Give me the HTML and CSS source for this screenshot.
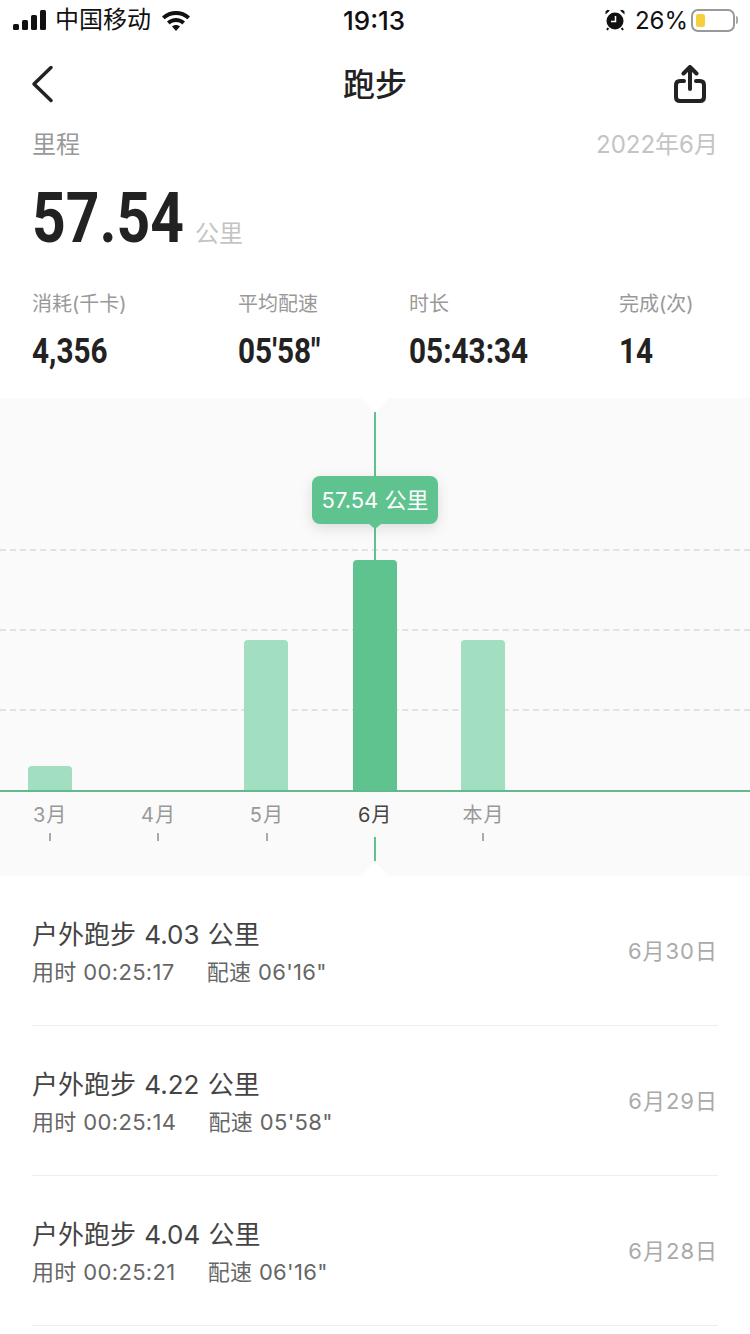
FILE: index.html
```html
<!doctype html>
<html lang="zh-CN">
<head>
    <meta charset="utf-8">
    <title>跑步</title>
    <link rel="stylesheet" href="styles.css">
</head>
<body>
    <div class="status">
        <div class="status-left">
            <svg class="signal" width="34" height="20" viewBox="0 0 34 20">
                <rect x="0" y="14" width="6" height="6" rx="1.5"/>
                <rect x="9" y="10" width="6" height="10" rx="1.5"/>
                <rect x="18" y="5" width="6" height="15" rx="1.5"/>
                <rect x="27" y="0" width="6" height="20" rx="1.5"/>
            </svg>
            <span class="carrier">中国移动</span>
            <svg class="wifi" width="30" height="22" viewBox="0 0 30 22">
                <path d="M1 7.5C9 .2 21 .2 29 7.5l-2.6 2.8C20 4.6 10 4.6 3.6 10.300z"/>
                <path d="M6 12.600c5.300-4.700 12.700-4.700 18 0l-2.700 2.900c-3.800-3.200-8.800-3.200-12.600 0z"/>
                <path d="M11 17.500c2.400-2 5.600-2 8 0L15 22z"/>
            </svg>
        </div>
        <div class="status-time">19:13</div>
        <div class="status-right">
            <svg class="alarm" width="20" height="22" viewBox="0 0 20 22">
                <circle cx="10" cy="12" r="8.500"/>
                <path d="M.5 5.500 5 1.500 2.500 .8 .5 2.500zM19.500 5.500 15 1.500 17.500 .8 19.500 2.500z"/>
                <path d="M3.300 19 2 21M16.700 19l1.300 2" class="alarm-leg"/>
                <path d="M10.500 7v5.500H6" class="alarm-hand"/>
            </svg>
            <span class="battery-pct">26%</span>
            <div class="battery"><div class="battery-fill"></div></div>
            <div class="battery-cap"></div>
        </div>
    </div>

    <div class="nav">
        <svg class="nav-back" width="24" height="38" viewBox="0 0 24 38">
            <path d="M21 2.500 4 19l17 16.500"/>
        </svg>
        <div class="nav-title">跑步</div>
        <svg class="nav-share" width="32" height="38" viewBox="0 0 32 38">
            <path d="M16 24V2.500M9.500 8.500 16 2l6.500 6.500"/>
            <path d="M10 16H6q-4 0-4 4v12q0 4 4 4h20q4 0 4-4V20q0-4-4-4h-4"/>
        </svg>
    </div>

    <div class="summary">
        <div class="summary-head">
            <span class="summary-label">里程</span>
            <span class="summary-date">2022年6月</span>
        </div>
        <div class="total">
            <span class="total-num">57.54</span>
            <span class="total-unit">公里</span>
        </div>
        <div class="stats">
            <div>
                <div class="stat-label">消耗(千卡)</div>
                <div class="stat-num">4,356</div>
            </div>
            <div>
                <div class="stat-label">平均配速</div>
                <div class="stat-num">05'58"</div>
            </div>
            <div>
                <div class="stat-label">时长</div>
                <div class="stat-num">05:43:34</div>
            </div>
            <div>
                <div class="stat-label">完成(次)</div>
                <div class="stat-num">14</div>
            </div>
        </div>
    </div>

    <div class="chart">
        <div class="plot">
            <div class="grid-line grid-a"></div>
            <div class="grid-line grid-b"></div>
            <div class="grid-line grid-c"></div>
            <div class="cursor"></div>
            <div class="tip">57.54 公里</div>
            <div class="bars">
                <div class="col"><div class="bar" style="height:24px"></div></div>
                <div class="col"></div>
                <div class="col"><div class="bar" style="height:150px"></div></div>
                <div class="col"><div class="bar active" style="height:230px"></div></div>
                <div class="col"><div class="bar" style="height:150px"></div></div>
            </div>
        </div>
        <div class="axis">
            <div class="tick"><span>3月</span><i></i></div>
            <div class="tick"><span>4月</span><i></i></div>
            <div class="tick"><span>5月</span><i></i></div>
            <div class="tick current"><span>6月</span><i></i></div>
            <div class="tick"><span>本月</span><i></i></div>
        </div>
    </div>

    <div class="records">
        <div class="record">
            <div class="record-main">
                <div class="record-title">户外跑步 4.03 公里</div>
                <div class="record-meta"><span>用时 00:25:17</span><span>配速 06'16"</span></div>
            </div>
            <div class="record-date">6月30日</div>
        </div>
        <div class="record">
            <div class="record-main">
                <div class="record-title">户外跑步 4.22 公里</div>
                <div class="record-meta"><span>用时 00:25:14</span><span>配速 05'58"</span></div>
            </div>
            <div class="record-date">6月29日</div>
        </div>
        <div class="record">
            <div class="record-main">
                <div class="record-title">户外跑步 4.04 公里</div>
                <div class="record-meta"><span>用时 00:25:21</span><span>配速 06'16"</span></div>
            </div>
            <div class="record-date">6月28日</div>
        </div>
    </div>
</body>
</html>
```

FILE: styles.css
```css
* {
    box-sizing: border-box;
}

html, body {
    margin: 0;
    height: 1334px;
    overflow: hidden;
}

body {
    background: #fff;
    font-family: Inter, "Noto Sans CJK SC", sans-serif;
    color: #222;
}

/* status bar */
.status {
    height: 40px;
    display: flex;
    align-items: center;
    justify-content: space-between;
    padding: 0 12px 0 13px;
    position: relative;
    color: #111;
}

.status-left, .status-right {
    display: flex;
    align-items: center;
}

.signal {
    fill: #111;
}

.carrier {
    font-size: 24px;
    line-height: 30px;
    margin: -1px 0 0 8px;
}

.wifi {
    fill: #111;
    margin-left: 10px;
}

.status-time {
    position: absolute;
    left: 343px;
    top: 5px;
    font-size: 26px;
    font-weight: 500;
}

.alarm {
    fill: #111;
    margin-right: 10px;
}

.alarm-leg {
    stroke: #111;
    stroke-width: 2;
    fill: none;
}

.alarm-hand {
    stroke: #fff;
    stroke-width: 1.500;
    fill: none;
}

.battery-pct {
    font-size: 24px;
    margin-right: 3px;
}

.battery {
    width: 44px;
    height: 23px;
    border: 2px solid #999;
    border-radius: 7px;
    padding: 3px;
}

.battery-fill {
    width: 9px;
    height: 100%;
    background: #f5cf3d;
    border-radius: 2px;
}

.battery-cap {
    width: 2px;
    height: 8px;
    margin-left: 1px;
    background: #aaa;
    border-radius: 0 2px 2px 0;
}

/* title bar */
.nav {
    height: 88px;
    display: flex;
    align-items: center;
    justify-content: space-between;
    padding: 0 44px 0 30px;
    position: relative;
}

.nav-back {
    fill: none;
    stroke: #222;
    stroke-width: 3.500;
    stroke-linecap: round;
    stroke-linejoin: round;
}

.nav-title {
    position: absolute;
    left: 0;
    right: 0;
    top: 25px;
    text-align: center;
    font-size: 32px;
    line-height: 40px;
    font-weight: 500;
}

.nav-share {
    fill: none;
    stroke: #222;
    stroke-width: 4;
    stroke-linecap: round;
    stroke-linejoin: round;
}

/* mileage summary */
.summary {
    padding: 0 32px;
    height: 270px;
}

.summary-head {
    display: flex;
    justify-content: space-between;
    font-size: 24px;
    line-height: 34px;
}

.summary-label {
    color: #999;
}

.summary-date {
    color: #c4c4c4;
}

.total {
    display: flex;
    align-items: baseline;
    margin-top: 18px;
    height: 76px;
}

/* narrow figures: the bold face squeezed horizontally */
.total-num, .stat-num {
    font-family: Roboto, "Liberation Sans", sans-serif;
    font-weight: 700;
    white-space: nowrap;
    transform-origin: left center;
}

.total-num {
    width: 152px;
    font-size: 70px;
    line-height: 76px;
    transform: scaleX(.84);
}

.total-unit {
    font-size: 24px;
    color: #c4c4c4;
    margin-left: 11px;
}

.stats {
    display: grid;
    grid-template-columns: 206px 171px 210px 1fr;
    margin-top: 33px;
}

.stat-label {
    font-size: 20px;
    line-height: 30px;
    color: #999;
}

.stat-num {
    font-size: 35px;
    line-height: 40px;
    margin-top: 13px;
    transform: scaleX(.85);
}

/* monthly chart */
.chart {
    height: 478px;
    background: #fafafa;
    position: relative;
}

.chart::before, .chart::after {
    content: "";
    position: absolute;
    left: 361px;
    width: 28px;
    height: 14px;
    background: #fff;
}

.chart::before {
    top: 0;
    clip-path: polygon(0 0, 100% 0, 50% 100%);
}

.chart::after {
    bottom: 0;
    clip-path: polygon(50% 0, 100% 100%, 0 100%);
}

.plot {
    height: 394px;
    position: relative;
    border-bottom: 2px solid #62b98f;
}

.grid-line {
    position: absolute;
    left: 0;
    right: 0;
    border-top: 2px dashed #e2e2e2;
}

.grid-a { top: 151px; }
.grid-b { top: 231px; }
.grid-c { top: 311px; }

.cursor {
    position: absolute;
    left: 374px;
    top: 14px;
    width: 2px;
    height: 150px;
    background: #5fc390;
}

.tip {
    position: absolute;
    left: 312px;
    top: 78px;
    width: 126px;
    height: 48px;
    border-radius: 8px;
    background: #5fc390;
    box-shadow: 0 4px 14px rgba(0, 0, 0, .12);
    color: #fff;
    font-size: 22px;
    line-height: 48px;
    text-align: center;
}

.tip::after {
    content: "";
    position: absolute;
    left: 57px;
    bottom: -5px;
    width: 12px;
    height: 5px;
    background: #5fc390;
    clip-path: polygon(0 0, 100% 0, 50% 100%);
}

.bars {
    position: absolute;
    left: -4.500px;
    bottom: 0;
    display: flex;
    align-items: flex-end;
}

.col {
    width: 108.330px;
    display: flex;
    justify-content: center;
}

.bar {
    width: 44px;
    background: #a1dfc0;
    border-radius: 4px 4px 0 0;
}

.bar.active {
    background: #5fc390;
}

.axis {
    display: flex;
    margin-left: -4px;
    padding-top: 10px;
}

.tick {
    width: 108.330px;
    display: flex;
    flex-direction: column;
    align-items: center;
    font-size: 20px;
    line-height: 26px;
    color: #999;
    letter-spacing: 1px;
}

.tick i {
    display: block;
    width: 2px;
    height: 8px;
    margin-top: 5px;
    background: #aaa;
}

.tick.current {
    color: #444;
}

.tick.current i {
    height: 24px;
    margin-top: 9px;
    background: #5fc390;
}

/* run list */
.records {
    padding: 0 32px;
}

.record {
    height: 150px;
    display: flex;
    align-items: center;
    justify-content: space-between;
    border-bottom: 1px solid #eee;
    padding-bottom: 1px;
}

.record-main {
    padding-top: 4px;
}

.record-title {
    font-size: 26px;
    line-height: 36px;
    color: #444;
    word-spacing: 1px;
}

.record-meta {
    display: flex;
    gap: 32px;
    margin-top: 4px;
    font-size: 22px;
    line-height: 30px;
    color: #666;
    letter-spacing: .35px;
}

.record-date {
    font-size: 22px;
    color: #aaa;
    letter-spacing: 1px;
    margin-bottom: 3px;
}
```
